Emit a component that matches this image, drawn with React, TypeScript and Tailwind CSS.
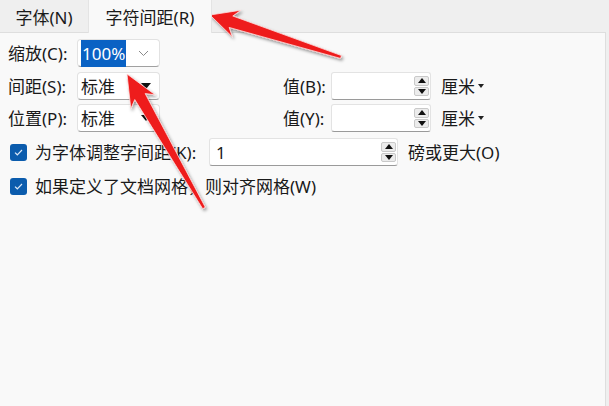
import type { ReactNode } from 'react'

type Pt = [number, number]

// red callout arrow: tapered shaft + head, tip first
function arrowPoints(tip: Pt, tail: Pt, headLen: number, headW: number, neckW: number, tailW: number) {
  const dx = tail[0] - tip[0]
  const dy = tail[1] - tip[1]
  const len = Math.hypot(dx, dy)
  const u: Pt = [dx / len, dy / len]
  const n: Pt = [-u[1], u[0]]
  const at = (d: number, w: number): Pt => [tip[0] + u[0] * d + n[0] * w, tip[1] + u[1] * d + n[1] * w]
  const pts: Pt[] = [
    tip,
    at(headLen + 4, headW),
    at(headLen - 2, neckW),
    at(len, tailW),
    at(len, -tailW),
    at(headLen - 2, -neckW),
    at(headLen + 4, -headW),
  ]
  return pts.map((p) => p.join(',')).join(' ')
}

function Spinner() {
  return (
    <div className="flex h-full w-[16px] flex-col justify-center gap-[1px] py-[3px] pr-[1px]">
      <div className="flex flex-1 items-center justify-center rounded-[2px] border border-[#c9c9c9] bg-[#ececec]">
        <div className="h-0 w-0 border-x-[4px] border-b-[5px] border-x-transparent border-b-[#111]" />
      </div>
      <div className="flex flex-1 items-center justify-center rounded-[2px] border border-[#c9c9c9] bg-[#ececec]">
        <div className="h-0 w-0 border-x-[4px] border-t-[5px] border-x-transparent border-t-[#111]" />
      </div>
    </div>
  )
}

function SpinBox({ w, value }: { w: string; value?: string }) {
  return (
    <div className={`flex h-[28px] ${w} items-center rounded-[3px] border border-[#e3e3e3] border-b-[#9a9a9a] bg-white pl-[6px]`}>
      <span className="flex-1">{value}</span>
      <Spinner />
    </div>
  )
}

function Combo({ children, chevron }: { children: ReactNode; chevron?: boolean }) {
  return (
    <div className="flex h-[28px] w-[83px] items-center rounded-[4px] border border-[#e2e2e2] border-b-[#a0a0a0] bg-white pl-[3px] pr-[8px]">
      <div className="flex-1">{children}</div>
      {chevron ? (
        <svg width="11" height="7" viewBox="0 0 11 7" className="mr-[2px]">
          <path d="M1 1l4.5 4.5L10 1" fill="none" stroke="#8a8a8a" strokeWidth="1" />
        </svg>
      ) : (
        <div className="h-0 w-0 border-x-[5px] border-t-[6px] border-x-transparent border-t-[#111]" />
      )}
    </div>
  )
}

function Unit() {
  return (
    <div className="ml-[10px] flex items-center gap-[3px]">
      <span>厘米</span>
      <div className="h-0 w-0 border-x-[3px] border-t-[4px] border-x-transparent border-t-[#222]" />
    </div>
  )
}

function Check() {
  return (
    <div className="flex h-[17px] w-[17px] items-center justify-center rounded-[3px] bg-[#0b5cad]">
      <svg width="9" height="7" viewBox="0 0 9 7">
        <path d="M1 3.6l2.3 2.2L8 1" fill="none" stroke="#dce9f7" strokeWidth="1.2" />
      </svg>
    </div>
  )
}

export default function App() {
  return (
    <div className="relative flex h-[406px] w-[609px] flex-col overflow-hidden bg-[#efefef] font-['Noto_Sans','Noto_Sans_CJK_SC',sans-serif] text-[17px] leading-none text-[#1a1a1a]">
      {/* Tabs */}
      <div className="flex h-[32px] shrink-0">
        <div className="flex w-[88px] items-center justify-center pt-[2px]">字体(N)</div>
        <div className="relative z-10 -mb-px flex w-[124px] items-center justify-center border-x border-[#e4e4e4] bg-[#f9f9f9] pt-[2px]">
          字符间距(R)
        </div>
      </div>

      {/* Panel */}
      <div className="mr-[3px] flex flex-1 flex-col border-t border-r border-[#dedede] bg-[#f9f9f9] pl-[8px] pt-[6px]">
        <div className="flex h-[28px] items-center">
          <span className="w-[69px]">缩放(C):</span>
          <Combo chevron>
            <span className="bg-[#0a62c4] px-px py-[2px] text-white">100%</span>
          </Combo>
        </div>

        <div className="mt-[5px] flex h-[28px] items-center">
          <span className="w-[69px]">间距(S):</span>
          <Combo>标准</Combo>
          <span className="ml-[123px] w-[48px]">值(B):</span>
          <SpinBox w="w-[100px]" />
          <Unit />
        </div>

        <div className="mt-[4px] flex h-[28px] items-center">
          <span className="w-[69px]">位置(P):</span>
          <Combo>标准</Combo>
          <span className="ml-[123px] w-[48px]">值(Y):</span>
          <SpinBox w="w-[100px]" />
          <Unit />
        </div>

        <div className="mt-[6px] flex h-[28px] items-center">
          <div className="ml-[2px] mr-[8px]">
            <Check />
          </div>
          <span className="w-[174px]">为字体调整字间距(K):</span>
          <SpinBox w="w-[189px]" value="1" />
          <span className="ml-[10px]">磅或更大(O)</span>
        </div>

        <div className="mt-[6px] flex h-[28px] items-center">
          <div className="ml-[2px] mr-[8px]">
            <Check />
          </div>
          <span>如果定义了文档网格，则对齐网格(W)</span>
        </div>
      </div>

      {/* Annotation arrows */}
      <svg className="pointer-events-none absolute inset-0" width="609" height="406">
        <defs>
          <filter id="sh" x="-20%" y="-20%" width="140%" height="140%">
            <feDropShadow dx="1.5" dy="2" stdDeviation="1.6" floodColor="#000" floodOpacity="0.4" />
          </filter>
        </defs>
        <g filter="url(#sh)" fill="#ee1b1b" stroke="#ffdede" strokeWidth="0.8" strokeLinejoin="round">
          <polygon points={arrowPoints([210, 15], [341, 57], 24, 14, 6, 1.5)} />
          <polygon points={arrowPoints([127, 74], [204, 208], 28, 14, 6, 1.5)} />
        </g>
      </svg>
    </div>
  )
}
